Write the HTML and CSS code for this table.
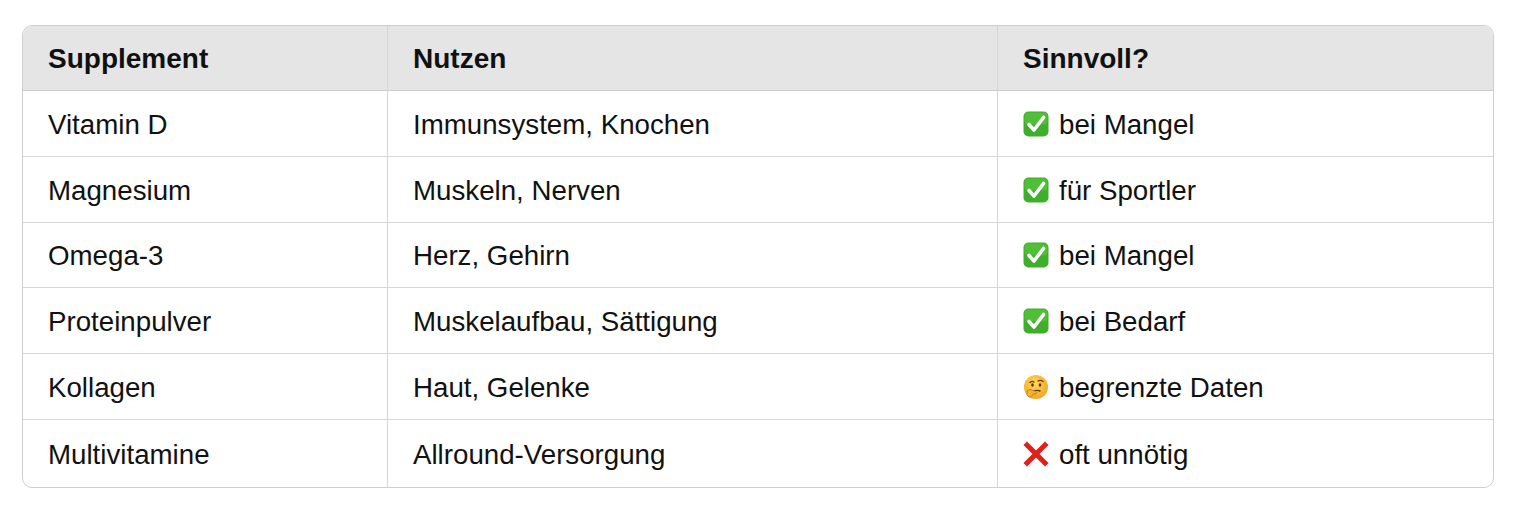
FILE: index.html
```html
<!DOCTYPE html>
<html lang="de">
<head>
<meta charset="utf-8">
<link rel="stylesheet" href="styles.css">
</head>
<body>
<div class="wrap">
<table class="tbl">
  <colgroup><col class="c1"><col class="c2"><col class="c3"></colgroup>
  <thead>
    <tr><th>Supplement</th><th>Nutzen</th><th>Sinnvoll?</th></tr>
  </thead>
  <tbody>
    <tr><td>Vitamin D</td><td>Immunsystem, Knochen</td><td><svg class="emo" viewBox="0 0 26 26"><rect x="0.5" y="0.5" width="25" height="25" rx="5" fill="#3fae2a"/><rect x="1.5" y="1.5" width="23" height="12" rx="4" fill="#5cc83f" opacity="0.6"/><path d="M6 13.5 L11 19 L20.5 6.5" fill="none" stroke="#fff" stroke-width="3.6" stroke-linecap="round" stroke-linejoin="round"/></svg>bei Mangel</td></tr>
    <tr><td>Magnesium</td><td>Muskeln, Nerven</td><td><svg class="emo" viewBox="0 0 26 26"><rect x="0.5" y="0.5" width="25" height="25" rx="5" fill="#3fae2a"/><rect x="1.5" y="1.5" width="23" height="12" rx="4" fill="#5cc83f" opacity="0.6"/><path d="M6 13.5 L11 19 L20.5 6.5" fill="none" stroke="#fff" stroke-width="3.6" stroke-linecap="round" stroke-linejoin="round"/></svg>für Sportler</td></tr>
    <tr><td>Omega-3</td><td>Herz, Gehirn</td><td><svg class="emo" viewBox="0 0 26 26"><rect x="0.5" y="0.5" width="25" height="25" rx="5" fill="#3fae2a"/><rect x="1.5" y="1.5" width="23" height="12" rx="4" fill="#5cc83f" opacity="0.6"/><path d="M6 13.5 L11 19 L20.5 6.5" fill="none" stroke="#fff" stroke-width="3.6" stroke-linecap="round" stroke-linejoin="round"/></svg>bei Mangel</td></tr>
    <tr><td>Proteinpulver</td><td>Muskelaufbau, Sättigung</td><td><svg class="emo" viewBox="0 0 26 26"><rect x="0.5" y="0.5" width="25" height="25" rx="5" fill="#3fae2a"/><rect x="1.5" y="1.5" width="23" height="12" rx="4" fill="#5cc83f" opacity="0.6"/><path d="M6 13.5 L11 19 L20.5 6.5" fill="none" stroke="#fff" stroke-width="3.6" stroke-linecap="round" stroke-linejoin="round"/></svg>bei Bedarf</td></tr>
    <tr><td>Kollagen</td><td>Haut, Gelenke</td><td><svg class="emo" viewBox="0 0 26 26"><defs><radialGradient id="fg" cx="0.45" cy="0.35" r="0.7"><stop offset="0" stop-color="#ffd95a"/><stop offset="1" stop-color="#f0a21e"/></radialGradient></defs><circle cx="13" cy="13" r="12" fill="url(#fg)"/><path d="M7 8.5 Q9 6.5 11 8" fill="none" stroke="#6b3d10" stroke-width="1.4" stroke-linecap="round"/><path d="M15 7 Q17.5 5.5 20 7.5" fill="none" stroke="#6b3d10" stroke-width="1.4" stroke-linecap="round"/><ellipse cx="9.5" cy="11" rx="1.3" ry="1.8" fill="#5a3210"/><ellipse cx="17" cy="11" rx="1.3" ry="1.8" fill="#5a3210"/><path d="M11 17 Q14 15.8 17 17" fill="none" stroke="#5a3210" stroke-width="1.4" stroke-linecap="round"/><path d="M4 17 Q7 14 10 16.5 L13 17.5 Q14.5 19 13 20 L10 20 Q9 24 6 23 Q3 21 4 17 Z" fill="#f2b233" stroke="#c27a12" stroke-width="0.8"/></svg>begrenzte Daten</td></tr>
    <tr><td>Multivitamine</td><td>Allround-Versorgung</td><td><svg class="emo" viewBox="0 0 26 26"><path d="M4 4 L22 22 M22 4 L4 22" stroke="#e0201b" stroke-width="5" stroke-linecap="square"/></svg>oft unnötig</td></tr>
  </tbody>
</table>
</div>
</body>
</html>
```
FILE: styles.css
```css
html, body {
  margin: 0;
  padding: 0;
  background: #ffffff;
}
body {
  font-family: "Liberation Sans", Arial, Helvetica, sans-serif;
  color: #111;
}
.wrap {
  padding: 25px 22px 0 22px;
}
.tbl {
  width: 1470px;
  border-collapse: separate;
  border-spacing: 0;
  border: 1.5px solid #cfcfcf;
  border-radius: 10px;
  overflow: hidden;
  table-layout: fixed;
  font-size: 27.7px;
}
.c1 { width: 365px; }
.c2 { width: 610px; }
.c3 { width: 495px; }
.tbl th, .tbl td {
  text-align: left;
  padding: 3px 0 0 25px;
  height: 61.8px;
  border-right: 1.5px solid #d6d6d6;
  border-bottom: 1.5px solid #d6d6d6;
  vertical-align: middle;
}
.tbl th:last-child, .tbl td:last-child {
  border-right: none;
}
.tbl tbody tr:last-child td {
  border-bottom: none;
  height: 63.8px;
}
.tbl thead th {
  background: #e5e5e5;
  font-weight: bold;
  font-size: 28px;
  padding-top: 1px;
  height: 63px;
  border-bottom: 1.5px solid #cccccc;
}
.emo {
  display: inline-block;
  width: 26px;
  height: 26px;
  margin-right: 10px;
  vertical-align: -3px;
}
```
